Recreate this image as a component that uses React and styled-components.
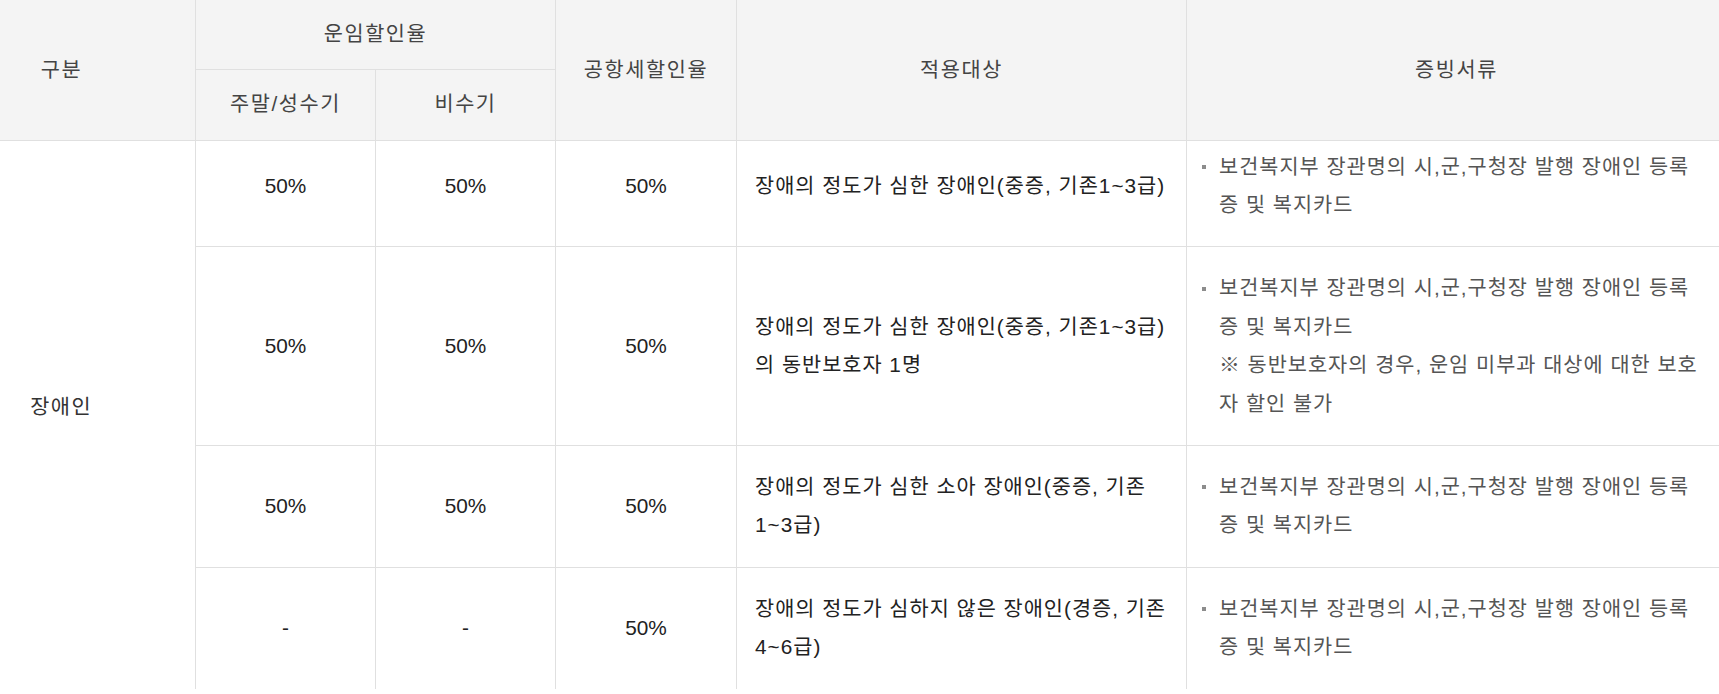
import React from "react";
import styled, { createGlobalStyle } from "styled-components";

const GlobalStyle = createGlobalStyle`
  html, body {
    margin: 0;
    padding: 0;
    background: #ffffff;
    overflow: hidden;
  }
  body {
    font-family: "Liberation Sans", "Noto Sans CJK KR", sans-serif;
    font-size: 20.8px;
    color: #222;
  }
`;

const Viewport = styled.div`
  width: 1719px;
  overflow: hidden;
`;

const Wrap = styled.div`
  margin-left: -73px;
  width: 1799px;
`;

const Table = styled.table`
  width: 1799px;
  table-layout: fixed;
  border-collapse: collapse;
  border-spacing: 0;
`;

const HeadCell = styled.th`
  height: ${(p) => p.$h}px;
  padding: 0;
  background: #f4f4f4;
  color: #444;
  font-weight: 400;
  font-size: 20.8px;
  line-height: 38.4px;
  letter-spacing: 1.6px;
  text-align: center;
  vertical-align: middle;
  border: 1px solid #e0e0e0;
  border-top: none;
  box-sizing: border-box;
`;

const BodyRow = styled.tr`
  & > td {
    padding-top: ${(p) => (p.$first ? 7 : 22)}px;
    padding-bottom: 22px;
    border-bottom: ${(p) => (p.$last ? "none" : "1px solid #e0e0e0")};
  }
`;

const Cell = styled.td`
  border-left: 1px solid #e0e0e0;
  border-right: 1px solid #e0e0e0;
  font-size: 20.8px;
  line-height: 38.4px;
  vertical-align: middle;
  color: #222;
  text-align: ${(p) => (p.$align === "left" ? "left" : "center")};
  letter-spacing: ${(p) => (p.$align === "left" ? "1px" : "0")};
  padding-left: ${(p) => p.$pl ?? 0}px;
  padding-right: ${(p) => p.$pr ?? 0}px;
`;

const GroupCell = styled.td`
  && {
    border-right: 1px solid #e0e0e0;
    border-bottom: none;
    padding: 7px 0 22px 0;
  }
  text-align: center;
  vertical-align: middle;
  color: #333;
  font-size: 20.8px;
  line-height: 38.4px;
  letter-spacing: 1.6px;
`;

const DocList = styled.ul`
  list-style: none;
  margin: 0;
  padding: 0;
`;

const DocItem = styled.li`
  display: flex;
  align-items: flex-start;
  color: #555;
`;

const Dot = styled.span`
  flex: 0 0 17px;
  display: flex;
  align-items: center;
  height: 38.4px;
  &::before {
    content: "";
    display: block;
    width: 4px;
    height: 4px;
    background: #8c8c8c;
  }
`;

const DocText = styled.div`
  flex: 1;
  min-width: 0;
`;

const DocLine = styled.div`
  white-space: nowrap;
`;

const docBase = ["보건복지부 장관명의 시,군,구청장 발행 장애인 등록", "증 및 복지카드"];

const rows = [
  {
    peak: "50%",
    off: "50%",
    tax: "50%",
    target: "장애의 정도가 심한 장애인(중증, 기존1~3급)",
    docs: docBase,
  },
  {
    peak: "50%",
    off: "50%",
    tax: "50%",
    target: "장애의 정도가 심한 장애인(중증, 기존1~3급)의 동반보호자 1명",
    docs: [...docBase, "※ 동반보호자의 경우, 운임 미부과 대상에 대한 보호", "자 할인 불가"],
  },
  {
    peak: "50%",
    off: "50%",
    tax: "50%",
    target: "장애의 정도가 심한 소아 장애인(중증, 기존 1~3급)",
    docs: docBase,
  },
  {
    peak: "-",
    off: "-",
    tax: "50%",
    target: "장애의 정도가 심하지 않은 장애인(경증, 기존 4~6급)",
    docs: docBase,
  },
];

export default function App() {
  return (
    <Viewport>
      <GlobalStyle />
      <Wrap>
        <Table>
          <colgroup>
            <col style={{ width: 268 }} />
            <col style={{ width: 180 }} />
            <col style={{ width: 180 }} />
            <col style={{ width: 181 }} />
            <col style={{ width: 450 }} />
            <col style={{ width: 540 }} />
          </colgroup>
          <thead>
            <tr>
              <HeadCell rowSpan={2} $h={69}>구분</HeadCell>
              <HeadCell colSpan={2} $h={69}>운임할인율</HeadCell>
              <HeadCell rowSpan={2} $h={69}>공항세할인율</HeadCell>
              <HeadCell rowSpan={2} $h={69}>적용대상</HeadCell>
              <HeadCell rowSpan={2} $h={69}>증빙서류</HeadCell>
            </tr>
            <tr>
              <HeadCell $h={71}>주말/성수기</HeadCell>
              <HeadCell $h={71}>비수기</HeadCell>
            </tr>
          </thead>
          <tbody>
            {rows.map((r, i) => (
              <BodyRow key={i} $first={i === 0} $last={i === rows.length - 1}>
                {i === 0 && <GroupCell rowSpan={rows.length}>장애인</GroupCell>}
                <Cell>{r.peak}</Cell>
                <Cell>{r.off}</Cell>
                <Cell>{r.tax}</Cell>
                <Cell $align="left" $pl={18} $pr={10}>
                  {r.target}
                </Cell>
                <Cell $align="left" $pl={15} $pr={10}>
                  <DocList>
                    <DocItem>
                      <Dot />
                      <DocText>
                        {r.docs.map((d, j) => (
                          <DocLine key={j}>{d}</DocLine>
                        ))}
                      </DocText>
                    </DocItem>
                  </DocList>
                </Cell>
              </BodyRow>
            ))}
          </tbody>
        </Table>
      </Wrap>
    </Viewport>
  );
}
